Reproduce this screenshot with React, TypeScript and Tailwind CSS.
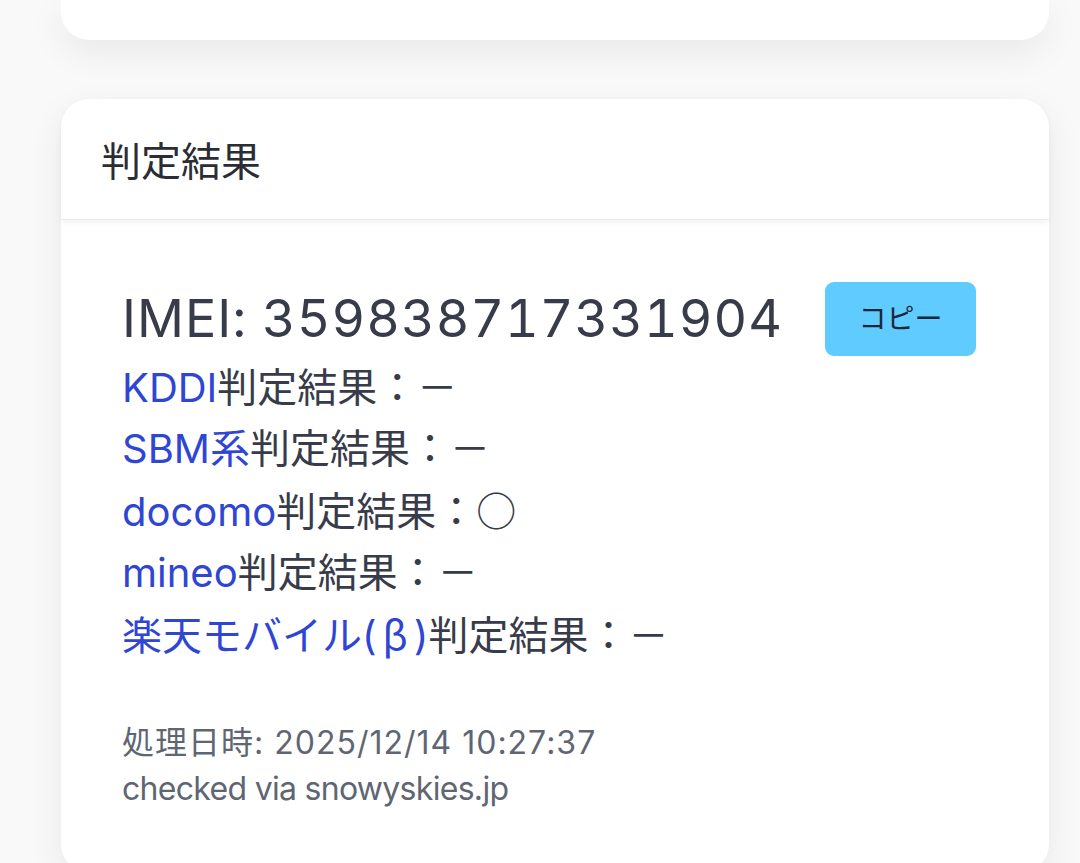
export default function App() {
  const cjk = { fontFamily: '"Noto Sans CJK JP", sans-serif' };

  return (
    <div
      className="min-h-[863px] bg-[#f9f9fa] pl-[61px] pr-[31px] pb-10 text-[#383c4a]"
      style={{ fontFamily: 'Inter, "Noto Sans CJK JP", sans-serif' }}
    >
      {/* previous card, scrolled mostly out of view */}
      <div className="h-[40px] rounded-b-[28px] bg-white shadow-[0_12px_36px_rgba(0,0,0,0.07)]" />

      {/* result card */}
      <div className="mt-[59px] rounded-[28px] bg-white shadow-[0_12px_36px_rgba(0,0,0,0.07)]">
        <div className="flex h-[121px] items-center rounded-t-[28px] border-b border-[#ebebeb] px-10 pt-[6px] shadow-[0_3px_6px_rgba(0,0,0,0.05)]">
          <h2 className="text-[40px] leading-none font-normal text-[#2a2d33]">判定結果</h2>
        </div>

        <div className="pl-[61px] pr-[73px] pt-[62px] pb-[60px]">
          <div className="flex items-center justify-between">
            <div className="text-[52px] leading-[74px] tracking-[1px] tabular-nums">IMEI: 359838717331904</div>
            <button className="h-[74px] w-[151px] rounded-[9px] bg-[#5fcbfe] text-[28px] text-[#1b2738]">
              コピー
            </button>
          </div>

          <div className="mt-[1px] text-[40px] leading-[61px]">
            <div>
              <a className="text-[#2f45d4]">KDDI</a>判定結果：－
            </div>
            <div>
              <a className="text-[#2f45d4]">SBM系</a>判定結果：－
            </div>
            <div>
              <a className="text-[#2f45d4]">docomo</a>判定結果：<span style={cjk}>○</span>
            </div>
            <div>
              <a className="text-[#2f45d4]">mineo</a>判定結果：－
            </div>
            <div>
              <a className="text-[#2f45d4]">
                楽天モバイル(<span className="px-[6px]" style={cjk}>β</span>)
              </a>
              判定結果：－
            </div>
          </div>

          <div className="mt-[54px] text-[32px] leading-[46px] text-[#5f6673]">
            <div className="tracking-[1px]">処理日時: 2025/12/14 10:27:37</div>
            <div className="tracking-[-0.7px]">checked via snowyskies.jp</div>
          </div>
        </div>
      </div>
    </div>
  );
}
